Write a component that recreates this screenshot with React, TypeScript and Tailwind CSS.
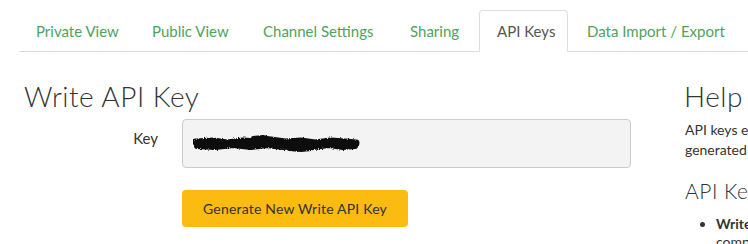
import React from "react";

const tabs = [
  { label: "Private View", w: "w-[114px]" },
  { label: "Public View", w: "w-[109px]" },
  { label: "Channel Settings", w: "w-[145px]" },
  { label: "Sharing", w: "w-[84px]" },
  { label: "API Keys", w: "w-[89px]", active: true },
  { label: "Data Import / Export", w: "w-[167px]" },
];

function Blob() {
  return (
    <svg width="170" height="20" viewBox="0 0 170 20" className="block">
      <defs>
        <filter id="rough" x="-5%" y="-40%" width="110%" height="180%">
          <feTurbulence type="fractalNoise" baseFrequency="0.9" numOctaves="2" result="n" />
          <feDisplacementMap in="SourceGraphic" in2="n" scale="3" />
        </filter>
      </defs>
      <g filter="url(#rough)" fill="#111" stroke="#111" strokeLinecap="round" strokeLinejoin="round">
        <path d="M3 8 L20 7 L34 9 L50 7 L64 8 L78 6 L92 8 L108 7 L122 9 L138 7 L152 8 L163 9" strokeWidth="7" fill="none" />
        <path d="M4 12 L22 13 L40 11 L58 13 L74 11 L90 13 L106 12 L120 13 L136 11 L150 13 L162 12" strokeWidth="6" fill="none" />
        <path d="M60 4 L70 3 L78 5" strokeWidth="4" fill="none" />
        <path d="M96 15 L108 16 L118 15" strokeWidth="4" fill="none" />
      </g>
    </svg>
  );
}

export default function App() {
  return (
    <div
      className="w-[748px] h-[244px] overflow-hidden bg-white relative"
      style={{ fontFamily: "Lato, 'Noto Sans', sans-serif" }}
    >
      {/* Tabs */}
      <div className="pt-[10px] pl-[19px]">
        <ul className="flex border-b border-[#dddddd] w-[729px] h-[42px]">
          {tabs.map((t) => (
            <li
              key={t.label}
              className={
                t.w +
                " mr-[2px] -mb-px h-[42px] flex items-center pl-[17px] text-[15px] whitespace-nowrap " +
                (t.active
                  ? "border border-[#dddddd] border-b-white rounded-t-[4px] bg-white text-[#555555]"
                  : "text-[#4fa25e]")
              }
            >
              {t.label}
            </li>
          ))}
        </ul>
      </div>

      {/* Content */}
      <div className="flex pl-[24px] pt-[28px]">
        <div className="w-[661px] shrink-0">
          <h1 className="text-[28px] font-light leading-[32px] text-[#333333] tracking-[0.5px]">
            Write API Key
          </h1>
          <div className="flex mt-[7px]">
            <div className="w-[134px] text-right text-[15px] text-[#333333] pt-[8px]">Key</div>
            <div className="ml-[24px] w-[449px] h-[49px] rounded-[4px] border border-[#cccccc] bg-[#f3f3f3] flex items-center pl-[10px]">
              <Blob />
            </div>
          </div>
          <div className="ml-[158px] mt-[22px]">
            <button className="w-[226px] h-[37px] rounded-[4px] bg-[#fcbb10] text-[14px] text-[#333333] tracking-[0.2px]">
              Generate New Write API Key
            </button>
          </div>
        </div>
        <div className="shrink-0 text-[#333333]">
          <h2 className="text-[28px] font-light leading-[32px] tracking-[0.5px] -ml-px">Help</h2>
          <p className="mt-[8px] text-[14px] leading-[20px] whitespace-nowrap">
            API keys enable you to write data to a channel or read data from a private channel. API keys are auto-
            <br />
            generated when you create a new channel.
          </p>
          <h3 className="mt-[19px] text-[21px] font-light leading-[24px] tracking-[0.5px]">API Keys Settings</h3>
          <ul className="mt-[12px] ml-[31px] list-disc text-[14px] leading-[18px] whitespace-nowrap">
            <li>
              <b>Write API Key</b>: Use this key to write data to a channel. If you feel your key has been
              <br />
              compromised, click Generate New Write API Key.
            </li>
          </ul>
        </div>
      </div>
    </div>
  );
}
